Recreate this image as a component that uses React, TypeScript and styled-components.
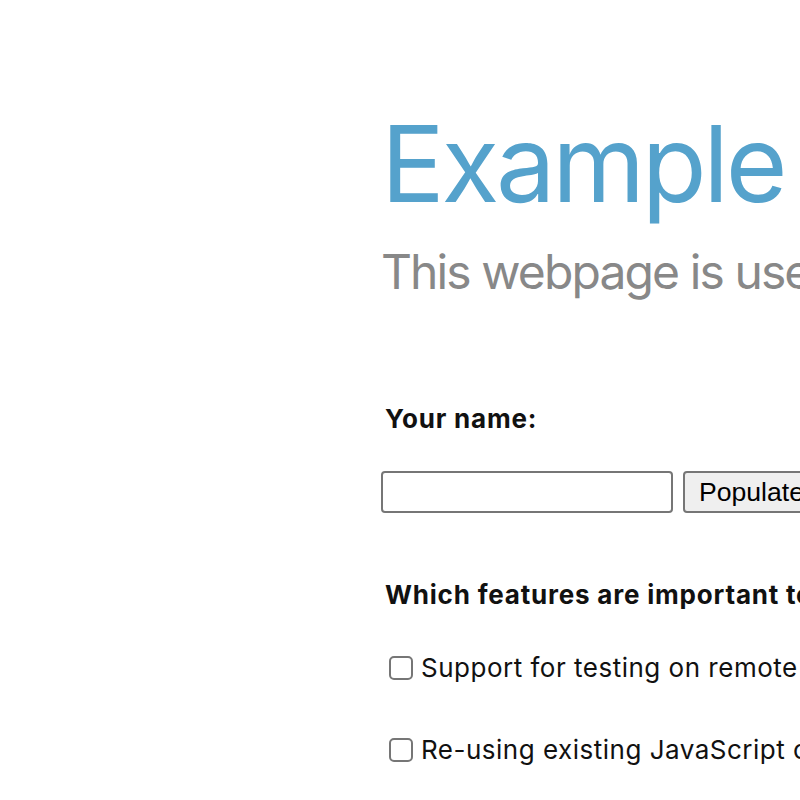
import React from 'react';
import styled, { createGlobalStyle } from 'styled-components';

const GlobalStyle = createGlobalStyle`
  html, body {
    margin: 0;
    padding: 0;
    background: #ffffff;
  }
  body {
    font-family: Inter, "Noto Sans", "Liberation Sans", sans-serif;
    color: #111111;
    overflow: hidden;
  }
`;

const Page = styled.main`
  width: 800px;
  height: 800px;
  overflow: hidden;
  padding-left: 381px;
  box-sizing: border-box;
  white-space: nowrap;
`;

const Header = styled.header`
  padding-top: 111px;
`;

const Title = styled.h1`
  margin: 0;
  font-size: 106px;
  line-height: 1;
  font-weight: 400;
  letter-spacing: -3.3px;
  color: #55a2cc;
`;

const Lead = styled.p`
  margin: 31px 0 0;
  font-size: 48px;
  line-height: 1;
  color: #888888;
  letter-spacing: -1.9px;
`;

const Fieldset = styled.section<{ $top: number }>`
  margin-top: ${(p) => p.$top}px;
`;

const Legend = styled.label`
  display: block;
  padding-left: 4px;
  font-size: 26px;
  line-height: 1;
  font-weight: 700;
  letter-spacing: 0.8px;
  color: #111111;
`;

const InputRow = styled.div`
  display: flex;
  gap: 10px;
  margin-top: 39px;
`;

const TextInput = styled.input`
  width: 292px;
  height: 42px;
  box-sizing: border-box;
  border: 2px solid #767676;
  border-radius: 4px;
  padding: 2px 4px;
  font-size: 26px;
  background: #ffffff;
`;

const Button = styled.button`
  height: 42px;
  box-sizing: border-box;
  border: 2px solid #767676;
  border-radius: 4px;
  background: #efefef;
  padding: 0 14px;
  font-family: "Liberation Sans", Arial, sans-serif;
  font-size: 26.6px;
  color: #000000;
`;

const Options = styled.div`
  display: flex;
  flex-direction: column;
  gap: 56px;
  margin-top: 47px;
`;

const Option = styled.label`
  display: flex;
  align-items: center;
  gap: 8px;
  padding-left: 8px;
  font-size: 26px;
  line-height: 26px;
  letter-spacing: 0.5px;
  color: #111111;
`;

const Check = styled.input`
  appearance: none;
  margin: 0;
  width: 24px;
  height: 24px;
  flex: none;
  box-sizing: border-box;
  border: 2px solid #767676;
  border-radius: 5px;
  background: #ffffff;
`;

const features = [
  'Support for testing on remote devices',
  'Re-using existing JavaScript code for testing',
  'Running tests in background and/or in parallel in multiple browsers',
  'Easy embedding into a Continuous integration system',
  'Advanced traffic and markup analysis',
];

export default function App() {
  return (
    <>
      <GlobalStyle />
      <Page>
        <Header>
          <Title>Example</Title>
          <Lead>This webpage is used as a sample in TestCafe tutorials.</Lead>
        </Header>

        <Fieldset $top={110}>
          <Legend htmlFor="developer-name">Your name:</Legend>
          <InputRow>
            <TextInput id="developer-name" type="text" />
            <Button type="button">Populate</Button>
          </InputRow>
        </Fieldset>

        <Fieldset $top={69}>
          <Legend>Which features are important to you:</Legend>
          <Options>
            {features.map((f) => (
              <Option key={f}>
                <Check type="checkbox" />
                {f}
              </Option>
            ))}
          </Options>
        </Fieldset>
      </Page>
    </>
  );
}
